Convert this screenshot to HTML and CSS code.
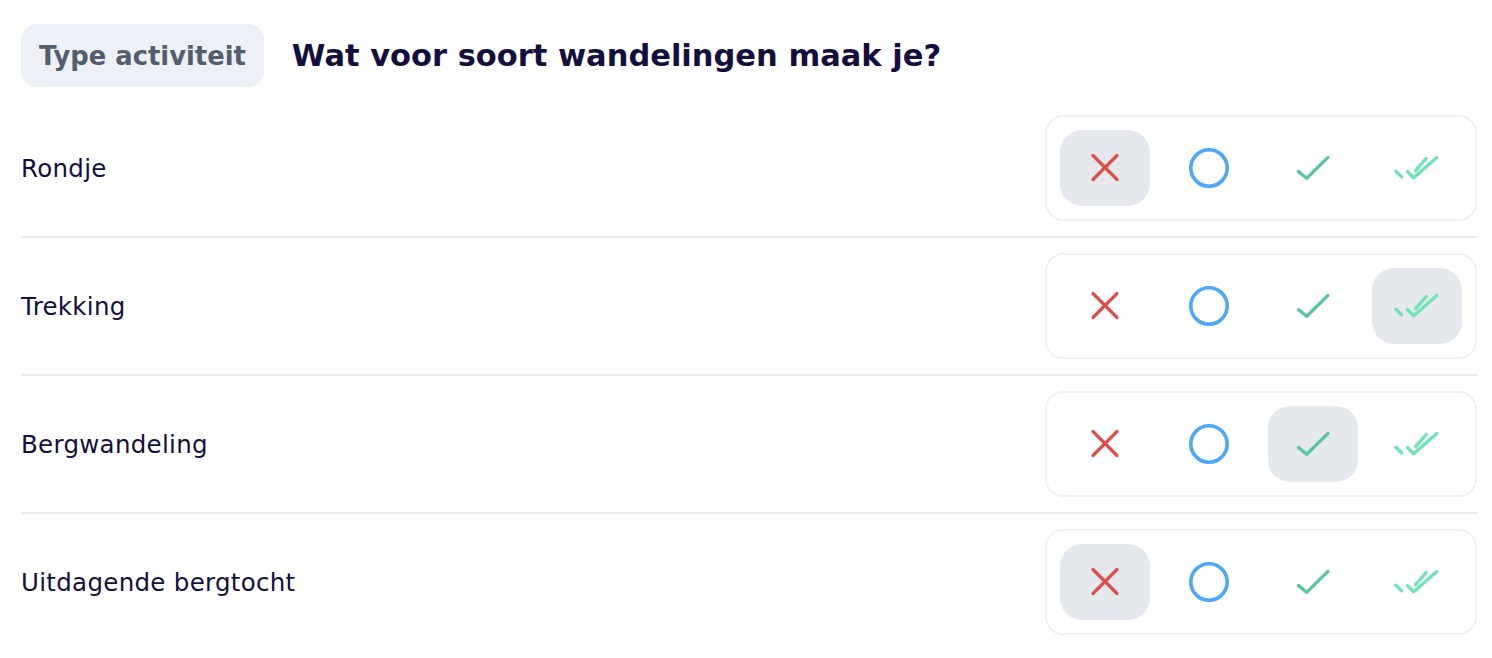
FILE: index.html
```html
<!DOCTYPE html>
<html lang="nl">
<head>
    <meta charset="UTF-8">
    <meta name="viewport" content="width=device-width, initial-scale=1.0">
    <title>Type activiteit</title>
    <link rel="stylesheet" href="styles.css">
</head>
<body>
    <main class="question">
        <header class="question-head">
            <span class="badge">Type activiteit</span>
            <h1>Wat voor soort wandelingen maak je?</h1>
        </header>

        <div class="answers" id="answers"></div>
    </main>

    <template id="icons">
        <svg class="icon" data-v="0" viewBox="0 0 48 48"><path d="M12 11.5 L36 35.5 M36 11.5 L12 35.5" stroke="#dc4f49" stroke-width="3.2" stroke-linecap="round" fill="none"/></svg>
        <svg class="icon" data-v="1" viewBox="0 0 48 48"><circle cx="24" cy="24" r="18.2" stroke="#4ea8f8" stroke-width="3.6" fill="none"/></svg>
        <svg class="icon" data-v="2" viewBox="0 0 48 48"><polyline points="9.5,27.6 17.7,34.2 39,13.4" stroke="#5ac59f" stroke-width="3.3" stroke-linecap="round" stroke-linejoin="round" fill="none"/></svg>
        <svg class="icon" data-v="3" viewBox="0 0 48 48"><path d="M2.8 27.2 L8.6 32.8 M14.5 27.6 L20.7 33.8 L43.8 13.5 M22.6 26.6 L33.2 14.5" stroke="#72e3b4" stroke-width="3.4" stroke-linecap="round" stroke-linejoin="round" fill="none"/></svg>
    </template>

    <script>
        const rows = [
            { label: "Rondje", value: 0 },
            { label: "Trekking", value: 3 },
            { label: "Bergwandeling", value: 2 },
            { label: "Uitdagende bergtocht", value: 0 },
        ];

        const answers = document.getElementById("answers");
        const icons = document.getElementById("icons").content;

        rows.forEach((row) => {
            const item = document.createElement("div");
            item.className = "answer";
            item.innerHTML = `<span class="answer-label">${row.label}</span><div class="choices"></div>`;
            const choices = item.querySelector(".choices");
            for (let i = 0; i < 4; i++) {
                const btn = document.createElement("button");
                btn.className = "choice" + (i === row.value ? " selected" : "");
                btn.appendChild(icons.querySelector(`[data-v="${i}"]`).cloneNode(true));
                btn.addEventListener("click", () => {
                    choices.querySelectorAll(".choice").forEach((b) => b.classList.remove("selected"));
                    btn.classList.add("selected");
                });
                choices.appendChild(btn);
            }
            answers.appendChild(item);
        });
    </script>
</body>
</html>
```

FILE: styles.css
```css
body {
    margin: 0;
    background: #ffffff;
    font-family: 'DejaVu Sans', 'Noto Sans', sans-serif;
    color: #140f3c;
}

.question {
    padding: 24px 15px 0 21px;
}

.question-head {
    display: flex;
    align-items: center;
    gap: 28px;
}

.badge {
    display: inline-flex;
    align-items: center;
    height: 63px;
    padding: 0 18px;
    border-radius: 16px;
    background: #edf1f7;
    color: #525e6d;
    font-size: 25.8px;
    font-weight: 700;
}

.question-head h1 {
    margin: 0;
    font-size: 30.5px;
    font-weight: 700;
    color: #140f3c;
}

.answers {
    margin-top: 13px;
}

.answer {
    display: flex;
    justify-content: space-between;
    align-items: center;
    padding: 15px 0;
    border-bottom: 2px solid #e8ebee;
}

.answer:last-child {
    border-bottom: none;
}

.answer-label {
    font-size: 24.5px;
    letter-spacing: 0.3px;
}

.choices {
    display: flex;
    gap: 14px;
    padding: 13px;
    border: 2px solid #eef1f6;
    border-radius: 18px;
}

.choice {
    display: flex;
    align-items: center;
    justify-content: center;
    width: 90px;
    height: 76px;
    padding: 0;
    border: none;
    border-radius: 22px;
    background: transparent;
    cursor: pointer;
}

.choice.selected {
    background: #e5e9ed;
}

.icon {
    width: 48px;
    height: 48px;
}
```
